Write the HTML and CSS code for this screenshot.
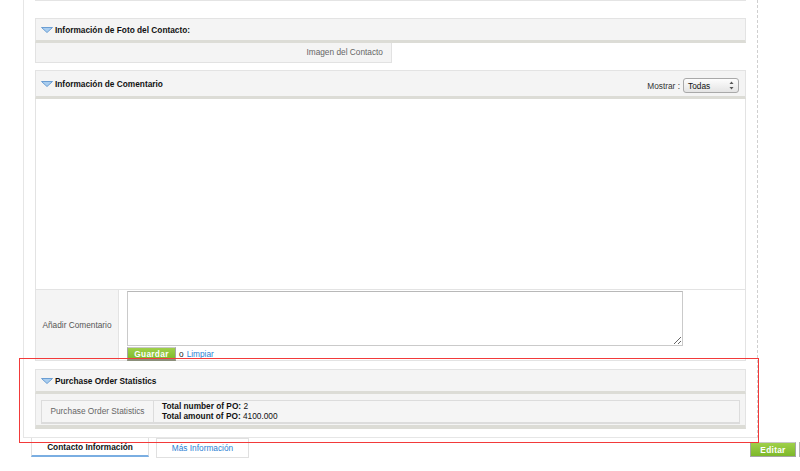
FILE: index.html
```html
<!DOCTYPE html>
<html lang="es">
<head>
  <meta charset="UTF-8">
  <meta name="viewport" content="width=device-width, initial-scale=1.0">
  <title>Contacto</title>
  <link rel="stylesheet" href="styles.css">
</head>
<body>
  <div class="page">
    <div class="panel-tail"></div>

    <div class="block">
      <div class="block-head">
        <svg class="toggle" width="12" height="6" viewBox="0 0 12 6"><polygon points="0.5,0.5 11.5,0.5 6,5.5" fill="#a9cdef" stroke="#6b9ed3" stroke-width="1"/></svg>
        <span class="block-title">Información de Foto del Contacto:</span>
      </div>
      <div class="photo-row">
        <div class="photo-cell">Imagen del Contacto</div>
      </div>
    </div>

    <div class="block">
      <div class="block-head head-tall">
        <svg class="toggle" width="12" height="6" viewBox="0 0 12 6"><polygon points="0.5,0.5 11.5,0.5 6,5.5" fill="#a9cdef" stroke="#6b9ed3" stroke-width="1"/></svg>
        <span class="block-title">Información de Comentario</span>
        <div class="show-filter">
          <span>Mostrar :</span>
          <span class="select">Todas
            <svg class="select-arrows" width="5" height="9" viewBox="0 0 5 9"><polygon points="2.5,0.5 4.5,3 0.5,3" fill="#555"/><polygon points="0.5,6 4.5,6 2.5,8.5" fill="#555"/></svg>
          </span>
        </div>
      </div>
      <div class="comment-list"></div>
      <div class="comment-form">
        <div class="form-label">Añadir Comentario</div>
        <div class="form-field">
          <textarea class="comment-box"></textarea>
          <div class="form-actions">
            <button class="btn-green btn-save">Guardar</button>
            <span class="or">o</span>
            <a href="#" class="link">Limpiar</a>
          </div>
        </div>
      </div>
    </div>

    <div class="block block-po">
      <div class="block-head">
        <svg class="toggle" width="12" height="6" viewBox="0 0 12 6"><polygon points="0.5,0.5 11.5,0.5 6,5.5" fill="#a9cdef" stroke="#6b9ed3" stroke-width="1"/></svg>
        <span class="block-title">Purchase Order Statistics</span>
      </div>
      <div class="po-body">
        <table class="po-table">
          <tr>
            <td class="po-label">Purchase Order Statistics</td>
            <td class="po-value">
              <b>Total number of PO:</b> 2<br>
              <b>Total amount of PO:</b> 4100.000
            </td>
          </tr>
        </table>
      </div>
    </div>
  </div>

  <div class="bottom-bar">
    <div class="tabs">
      <a href="#" class="tab active">Contacto Información</a>
      <a href="#" class="tab">Más Información</a>
    </div>
    <div class="actions">
      <button class="btn-green btn-edit">Editar</button>
      <span class="btn-edge"></span>
    </div>
  </div>

  <div class="highlight"></div>
</body>
</html>
```

FILE: styles.css
```css
html, body {
  margin: 0;
  padding: 0;
  height: 100%;
}

body {
  font-family: "Liberation Sans", Arial, sans-serif;
  font-size: 8.3px;
  color: #222;
  background: #fff;
  overflow: hidden;
  position: relative;
}

.page {
  width: 711px;
  margin-left: 23px;
  padding: 0 11px 8px 11px;
  border-left: 1px solid #e6e6e6;
  border-right: 1px dashed #cfcfcf;
  border-bottom: 1px solid #e6e6e6;
}

.panel-tail {
  height: 0;
  border: 1px solid #e4e4e4;
  border-top: none;
}

.block {
  margin-top: 17px;
}

.block + .block {
  margin-top: 7px;
}

.block + .block-po {
  margin-top: 8px;
}

.block-head {
  display: flex;
  align-items: center;
  height: 21px;
  padding: 0 6px 0 5px;
  background: #f4f4f4;
  border: 1px solid #e3e3e3;
  border-bottom: 3px solid #dcdcd6;
}

.head-tall {
  height: 25px;
}

.toggle {
  display: block;
  margin-right: 2px;
}

.block-title {
  font-weight: bold;
  color: #111;
}

.photo-row {
  display: flex;
}

.photo-cell {
  width: 347px;
  height: 19px;
  line-height: 19px;
  padding-right: 8px;
  text-align: right;
  color: #666;
  background: #f4f4f4;
  border: 1px solid #e2e2e2;
  border-top: none;
}

.show-filter {
  margin-left: auto;
  display: flex;
  align-items: center;
  gap: 3px;
  padding-top: 4px;
  color: #333;
}

.select {
  display: flex;
  align-items: center;
  justify-content: space-between;
  box-sizing: border-box;
  width: 56px;
  height: 15px;
  padding: 0 4px 0 4px;
  border: 1px solid #a9a9a9;
  border-radius: 3px;
  background: linear-gradient(#fdfdfd, #e4e4e4);
  color: #111;
}

.comment-list {
  height: 190px;
  border-left: 1px solid #e3e3e3;
  border-right: 1px solid #e3e3e3;
}

.comment-form {
  display: flex;
  height: 70px;
  border: 1px solid #e3e3e3;
}

.form-label {
  width: 82px;
  display: flex;
  align-items: center;
  justify-content: center;
  color: #555;
  background: #f4f4f4;
  border-right: 1px solid #e3e3e3;
}

.form-field {
  padding: 1px 0 0 8px;
}

.comment-box {
  display: block;
  box-sizing: border-box;
  width: 556px;
  height: 55px;
  margin: 0;
  border: 1px solid #cacaca;
  border-top-color: #b8b8b8;
  font-family: inherit;
  font-size: 8.3px;
}

.form-actions {
  display: flex;
  align-items: center;
  gap: 3px;
  margin-top: 1px;
}

.btn-green {
  font-family: inherit;
  font-weight: bold;
  font-size: 8.3px;
  color: #fff;
  background: linear-gradient(#9fd04a, #7db82a);
  border: 1px solid #a5a5a5;
  border-top-color: #c8c8c8;
  padding: 0;
  cursor: pointer;
}

.btn-save {
  width: 49px;
  height: 14px;
  border-bottom: 2px solid #8b8f7a;
  letter-spacing: 0.3px;
}

.or {
  color: #222;
}

.link {
  color: #2a7fd4;
  text-decoration: none;
}

.po-body {
  padding: 6px 5px 1px 5px;
  background: #f4f4f4;
  border-left: 1px solid #e3e3e3;
  border-right: 1px solid #e3e3e3;
  border-bottom: 4px solid #dcdcd6;
}

.po-table {
  width: 100%;
  border-collapse: collapse;
  background: #f5f5f5;
  border: 1px solid #dcdcdc;
  border-bottom-width: 2px;
}

.po-table td {
  padding: 1px 8px;
  line-height: 9.5px;
}

.po-label {
  width: 95px;
  color: #666;
  text-align: center;
  border-right: 1px solid #dcdcdc;
}

.po-value {
  color: #111;
}

.bottom-bar {
  display: flex;
  align-items: flex-start;
}

.tabs {
  display: flex;
  gap: 7px;
  margin-left: 31px;
}

.tab {
  display: block;
  height: 18px;
  line-height: 18px;
  text-align: center;
  text-decoration: none;
  border: 1px solid #e0e0e0;
  color: #2a7fd4;
}

.tab.active {
  width: 116px;
  height: 17px;
  line-height: 19px;
  font-weight: bold;
  color: #111;
  border-top: none;
  border-bottom: 2px solid #7aaee2;
}

.tab:not(.active) {
  width: 91px;
}

.actions {
  display: flex;
  gap: 3px;
  margin-left: auto;
  margin-top: 4px;
}

.btn-edit {
  width: 46px;
  height: 15px;
  letter-spacing: 0.3px;
}

.btn-edge {
  display: block;
  width: 0;
  height: 13px;
  border-left: 1px solid #b5b5b5;
  border-top: 1px solid #b5b5b5;
  border-bottom: 1px solid #b5b5b5;
}

.highlight {
  position: absolute;
  left: 19px;
  top: 358px;
  width: 738px;
  height: 83px;
  border: 1px solid #f23a3a;
  pointer-events: none;
}
```
